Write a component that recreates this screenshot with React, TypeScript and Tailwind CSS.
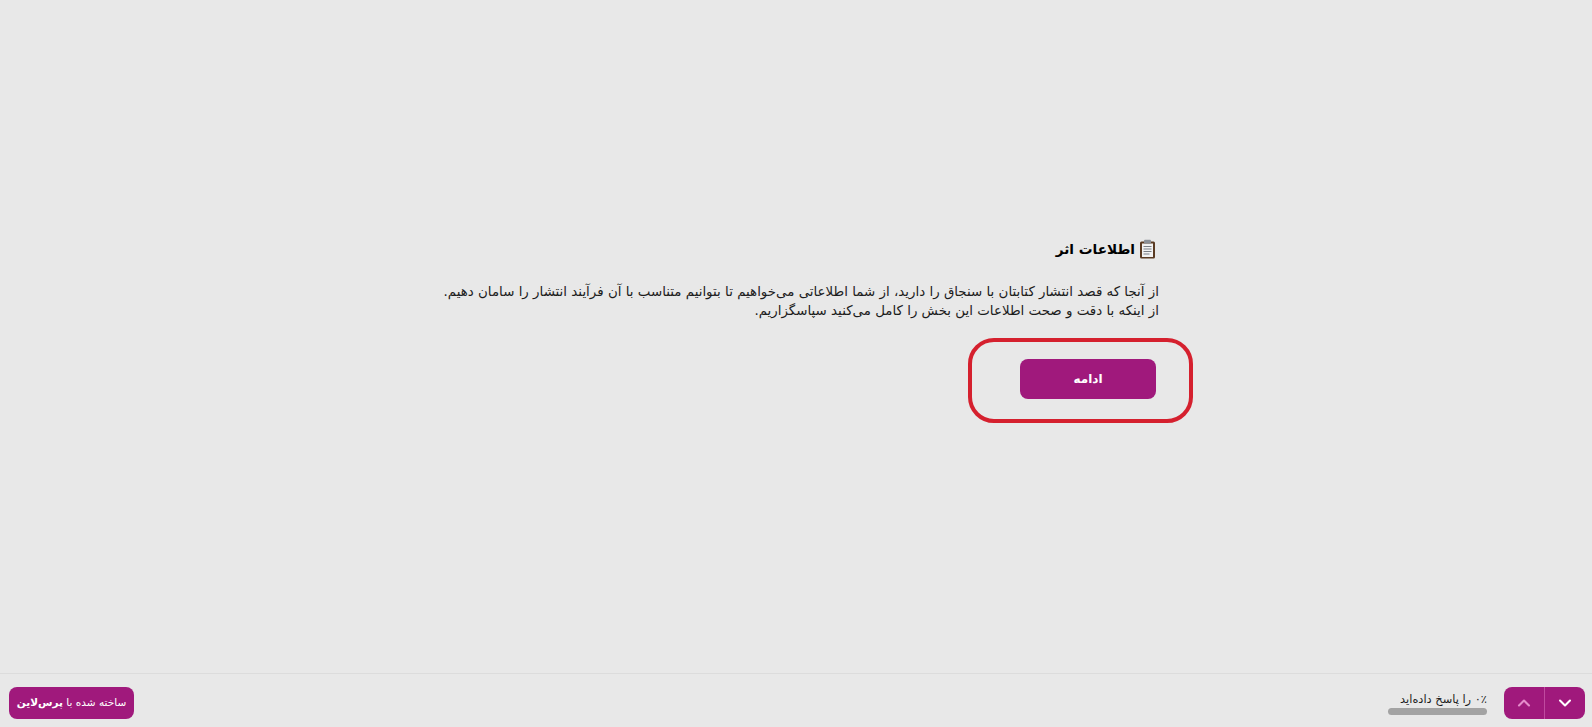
import { ChevronDown, ChevronUp } from "lucide-react";

function ClipboardIcon() {
  return (
    <svg width="17" height="20" viewBox="0 0 17 20" className="shrink-0">
      <rect x="1" y="2.5" width="15" height="17" rx="1.5" fill="#5a3a22" />
      <rect x="3" y="4.5" width="11" height="13.5" fill="#f2f2f2" />
      <rect x="5" y="0.8" width="7" height="3.6" rx="1" fill="#8a8f96" />
      <path d="M4.5 7.5h8M4.5 10h8M4.5 12.5h8M4.5 15h6" stroke="#7a7f86" strokeWidth="1" />
    </svg>
  );
}

export default function App() {
  return (
    <div
      dir="rtl"
      className="h-screen flex flex-col bg-[#e8e8e8] text-[#1c1c1c] font-['DejaVu_Sans',sans-serif] overflow-hidden"
    >
      {/* Welcome screen */}
      <main className="flex-1 flex justify-center pt-[237px]">
        <div className="w-[726px]">
          <h1 className="flex items-center gap-1 h-6 mr-[3px] text-[13.7px] font-bold text-black">
            <ClipboardIcon />
            اطلاعات اثر
          </h1>
          <p className="mt-[22px] text-[13.4px] leading-[18.5px]">
            از آنجا که قصد انتشار کتابتان با سنجاق را دارید، از شما اطلاعاتی می‌خواهیم تا بتوانیم متناسب با آن فرآیند انتشار را سامان دهیم.
            <br />
            از اینکه با دقت و صحت اطلاعات این بخش را کامل می‌کنید سپاسگزاریم.
          </p>
          <div className="relative mt-[39px] mr-[3px] w-[136px]">
            <button className="w-[136px] h-10 rounded-lg bg-[#a0197c] text-white text-xs font-bold">
              ادامه
            </button>
            {/* red annotation */}
            <div className="absolute -top-[21px] -bottom-6 -right-[37px] -left-[52px] rounded-[26px] border-4 border-[#d5202e] pointer-events-none" />
          </div>
        </div>
      </main>

      {/* Footer */}
      <footer className="h-[54px] shrink-0 border-t border-[#dcdcdc] flex items-center justify-between pt-1 pr-[7px] pl-[9px]">
        <div className="flex items-center gap-[17px]">
          <div className="flex h-8 w-[81px] rounded-lg bg-[#a0197c] text-white">
            <button className="flex-1 flex items-center justify-center border-l border-[#c04a9f]">
              <ChevronDown size={20} strokeWidth={2.5} />
            </button>
            <button className="flex-1 flex items-center justify-center text-[#e58ccb]">
              <ChevronUp size={20} strokeWidth={2.5} />
            </button>
          </div>
          <div className="w-[99px]">
            <div className="text-[11.4px] leading-4 whitespace-nowrap">۰٪ را پاسخ داده‌اید</div>
            <div className="mt-[1px] h-[7px] rounded-full bg-[#a3a3a3]" />
          </div>
        </div>
        <button className="h-8 w-[125px] rounded-lg bg-[#a0197c] text-white text-[10.5px] whitespace-nowrap">
          ساخته شده با <b>پرس‌لاین</b>
        </button>
      </footer>
    </div>
  );
}
